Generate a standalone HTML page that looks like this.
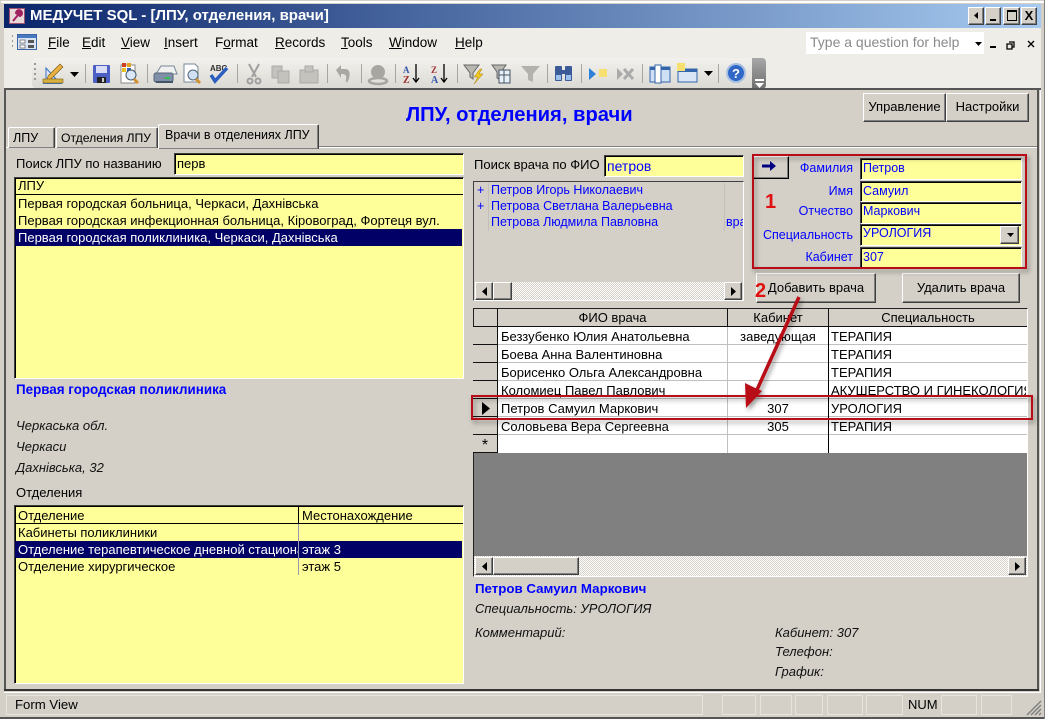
<!DOCTYPE html>
<html><head><meta charset="utf-8"><style>
html,body{margin:0;padding:0}
#r{position:relative;width:1045px;height:719px;overflow:hidden;background:#d4d0c8;font-family:"Liberation Sans",sans-serif;font-size:13px;color:#000}
#r div,#r svg{position:absolute;box-sizing:border-box}
.t{white-space:nowrap;line-height:16px;height:16px}
.u{text-decoration:underline}
.m{font-size:13.5px}
.b{background:#d4d0c8;border:1px solid;border-color:#fff #404040 #404040 #fff;box-shadow:inset -1px -1px 0 #808080;text-align:center}
.i{background:#ffff99;border:1px solid;border-color:#404040 #fff #fff #404040;box-shadow:inset 1px 1px 0 #000}
.blue{color:#0000ff;font-size:12.5px}
.bb{color:#0000ff;font-weight:bold;font-size:13.3px}
.it{font-style:italic;color:#111}
.tr{background:repeating-conic-gradient(#fff 0 25%,#d4d0c8 0 50%) 0 0/2px 2px}
.sel{background:#000066}
.sc{background:#d4d0c8;border-right:1px solid #111;border-bottom:1px solid #111;width:25px;height:18px;left:473px}
.h{background:#d4d0c8;border-right:1px solid #111;border-bottom:1px solid #111;height:19px;top:308px;text-align:center;line-height:18px;border-top:1px solid #222}
.l{height:1px;background:#c0c0c0;left:498px;width:529px}
.p{height:20px;top:695px;border:1px solid #e6e4de}
</style></head><body><div id="r">
<!-- window frame -->
<div style="left:1px;top:1px;width:1043px;height:2px;background:#fff"></div>
<div style="left:0;top:717px;width:1045px;height:2px;background:#555"></div>
<div style="left:1044px;top:0;width:1px;height:719px;background:#808080"></div>
<!-- title -->
<div style="left:4px;top:4px;width:1037px;height:24px;background:linear-gradient(90deg,#0a246a,#a6caf0)"></div>
<svg style="left:9px;top:8px" width="16" height="16"><rect x=".5" y=".5" width="15" height="15" fill="#e8d8d8" stroke="#a05070"/><path d="M4 13l5-6M7 5a3 3 0 1 1 4 3z" stroke="#a02060" stroke-width="2" fill="#a02060"/></svg>
<div class="t" style="left:30px;top:8px;color:#fff;font-weight:bold;font-size:15px">МЕДУЧЕТ SQL - [ЛПУ, отделения, врачи]</div>
<div class="b" style="left:968px;top:7px;width:16px;height:18px"><svg style="left:5px;top:4px" width="4" height="7"><path d="M4 0v7L0 3.500z"/></svg></div>
<div class="b" style="left:985px;top:7px;width:16px;height:18px"><div style="left:4px;top:11px;width:6px;height:2px;background:#000"></div></div>
<div class="b" style="left:1003px;top:7px;width:17px;height:18px"><div style="left:3px;top:2px;width:10px;height:11px;border:1px solid #000;border-top-width:2px"></div></div>
<div class="b" style="left:1021px;top:7px;width:16px;height:18px;font-weight:bold;font-size:13px;line-height:15px">X</div>
<!-- menu -->
<div style="left:4px;top:28px;width:1037px;height:61px;background:#eeede8"></div>
<svg style="left:10px;top:33px" width="28" height="20"><path d="M2 2h1v2H2zM2 7h1v2H2zM2 12h1v2H2z" fill="#999"/><rect x="7.500" y="1.500" width="19" height="15" fill="#d8e4f4" stroke="#3a66a8"/><rect x="8" y="2" width="18" height="3" fill="#4878c0"/><rect x="10" y="7" width="5" height="3" fill="#fff" stroke="#444" stroke-width=".6"/><rect x="10" y="12" width="5" height="3" fill="#fff" stroke="#444" stroke-width=".6"/><rect x="18" y="7" width="6" height="3" fill="#555"/><rect x="18" y="12" width="6" height="3" fill="#555"/></svg>
<div class="t m" style="left:48px;top:35px"><span class="u">F</span>ile</div>
<div class="t m" style="left:82px;top:35px"><span class="u">E</span>dit</div>
<div class="t m" style="left:121px;top:35px"><span class="u">V</span>iew</div>
<div class="t m" style="left:164px;top:35px"><span class="u">I</span>nsert</div>
<div class="t m" style="left:215px;top:35px">F<span class="u">o</span>rmat</div>
<div class="t m" style="left:275px;top:35px"><span class="u">R</span>ecords</div>
<div class="t m" style="left:341px;top:35px"><span class="u">T</span>ools</div>
<div class="t m" style="left:389px;top:35px"><span class="u">W</span>indow</div>
<div class="t m" style="left:455px;top:35px"><span class="u">H</span>elp</div>
<div style="left:806px;top:32px;width:178px;height:22px;background:#fff"></div>
<div class="t" style="left:810px;top:34px;font-size:14px;color:#8a8a8a">Type a question for help</div>
<svg style="left:975px;top:36px" width="65" height="16"><path d="M0 6h7l-3.500 4z" fill="#000"/><rect x="15" y="10" width="6" height="2" fill="#000"/><path d="M34 6h5v5h-2M32 8h5v5h-5z" fill="none" stroke="#000" stroke-width="1.300"/><path d="M53 5l6 6M59 5l-6 6" stroke="#000" stroke-width="1.300"/></svg>
<!-- toolbar -->
<div style="left:32px;top:58px;width:722px;height:30px;background:linear-gradient(#f2f1ed,#dcdad4);border-radius:4px 0 0 4px"></div>
<div style="left:752px;top:58px;width:14px;height:31px;background:linear-gradient(#a8a8a8,#6e6e6e);border-radius:0 4px 4px 0"></div>
<svg style="left:30px;top:58px" width="740" height="31">
<g fill="#999"><rect x="4" y="5" width="2" height="2"/><rect x="4" y="10" width="2" height="2"/><rect x="4" y="15" width="2" height="2"/><rect x="4" y="20" width="2" height="2"/></g>
<path d="M13 5v17h19v4H13z" fill="#2f6fc8"/><path d="M16 10v11h10z" fill="#e4e4f0" stroke="#2f6fc8"/><path d="M18 18l12-12 3 3-12 12-4 1z" fill="#e8b040" stroke="#705010" stroke-width=".6"/><rect x="13" y="21" width="20" height="4" fill="#d8b040" stroke="#806010" stroke-width=".6"/>
<path d="M40 14h9l-4.500 5z" fill="#000"/>
<g fill="#a8a6a0"><rect x="55" y="6" width="1" height="19"/><rect x="117" y="6" width="1" height="19"/><rect x="207" y="6" width="1" height="19"/><rect x="297" y="6" width="1" height="19"/><rect x="331" y="6" width="1" height="19"/><rect x="365" y="6" width="1" height="19"/><rect x="427" y="6" width="1" height="19"/><rect x="517" y="6" width="1" height="19"/><rect x="551" y="6" width="1" height="19"/><rect x="612" y="6" width="1" height="19"/><rect x="688" y="6" width="1" height="19"/></g>
<rect x="63" y="7" width="17" height="18" rx="1" fill="#4c5fc4"/><rect x="66" y="8" width="11" height="7" fill="#d8dcf4"/><rect x="67" y="19" width="9" height="6" fill="#222"/><rect x="72" y="20" width="2" height="4" fill="#ccc"/>
<rect x="91" y="7" width="14" height="18" fill="#fff" stroke="#888"/><rect x="92" y="5" width="4" height="4" fill="#d04020"/><rect x="97" y="5" width="4" height="4" fill="#e8a020"/><rect x="92" y="10" width="4" height="4" fill="#e8c020"/><rect x="97" y="10" width="4" height="4" fill="#3060c0"/><circle cx="101" cy="17" r="5" fill="#d8e8f8" stroke="#456"/><path d="M104 21l4 4" stroke="#d09030" stroke-width="3"/>
<path d="M126 16l5-8h13l3 8z" fill="#f0f0f0" stroke="#789"/><rect x="124" y="15" width="19" height="9" rx="2" fill="#7f8fa8" stroke="#567"/><rect x="135" y="19" width="5" height="2" fill="#30c050"/><rect x="126" y="23" width="17" height="2" fill="#456"/>
<path d="M154 6h11l3 3v15h-14z" fill="#fff" stroke="#789"/><circle cx="163" cy="17" r="5" fill="#cfe0f4" stroke="#567"/><path d="M166 21l4 4" stroke="#d09030" stroke-width="3"/>
<text x="180" y="13" font-size="8" font-weight="bold" font-family="Liberation Sans" fill="#333">ABC</text><path d="M181 17l4 6 12-13" fill="none" stroke="#2d5fc0" stroke-width="3.500"/>
<g fill="none" stroke="#a0a0a0" stroke-width="2"><path d="M219 6l7 13M229 6l-7 13"/><circle cx="220" cy="23" r="2.500"/><circle cx="228" cy="23" r="2.500"/></g>
<g fill="#c4c2bc" stroke="#aaa"><rect x="242" y="8" width="10" height="12"/><rect x="248" y="13" width="11" height="12"/><rect x="270" y="12" width="18" height="13"/><rect x="275" y="8" width="8" height="6"/></g>
<path d="M306 12l5-5v4h4c5 0 6 5 3 12-1 2-3 2-2-1 1-5-1-6-5-6v4z" fill="#aaa8a2"/>
<circle cx="348" cy="14" r="7" fill="#a8a6a0"/><ellipse cx="348" cy="23" rx="9" ry="3" fill="none" stroke="#a8a6a0" stroke-width="2.500"/>
<g transform="translate(2 0)"><text x="371" y="15" font-size="9" font-weight="bold" font-family="Liberation Serif" fill="#3355aa">A</text><text x="371" y="25" font-size="10" font-weight="bold" font-family="Liberation Serif" fill="#a03030">Z</text><path d="M384 6v17M381 20l3 4 3-4" stroke="#000" fill="none" stroke-width="1.300"/></g>
<g transform="translate(3 0)"><text x="398" y="15" font-size="9" font-weight="bold" font-family="Liberation Serif" fill="#a03030">Z</text><text x="398" y="25" font-size="10" font-weight="bold" font-family="Liberation Serif" fill="#3355aa">A</text><path d="M411 6v17M408 20l3 4 3-4" stroke="#000" fill="none" stroke-width="1.300"/></g>
<g transform="translate(6 0)"><path d="M428 7h15l-6 8v6l-3-2v-4z" fill="#b8b8b0" stroke="#666"/><path d="M444 11l-6 8h4l-4 7 9-10h-4l3-5z" fill="#f0c820" stroke="#a07810" stroke-width=".5"/></g>
<g transform="translate(4 0)"><path d="M458 7h14l-5 7v8l-4-2v-6z" fill="#b8b8b0" stroke="#666"/><rect x="465" y="12" width="11" height="13" fill="#e8f0f8" stroke="#456"/><path d="M465 17h11M470 12v13" stroke="#456"/></g>
<path d="M491 8h19l-7 8v8l-5-2v-6z" fill="#b4b2ac"/>
<g fill="#3a5a98"><rect x="525" y="8" width="7" height="15" rx="1"/><rect x="535" y="8" width="7" height="15" rx="1"/><rect x="531" y="12" width="5" height="4"/></g><g fill="#9cc0ec"><rect x="526" y="17" width="5" height="5"/><rect x="536" y="17" width="5" height="5"/></g>
<path d="M559 10l7 6-7 6z" fill="#2f80d8"/><rect x="569" y="11" width="8" height="8" fill="#f8e070"/>
<g transform="translate(-3 0)"><path d="M590 10l6 6-6 6z" fill="#aaa"/><path d="M597 11l9 10M606 11l-9 10" stroke="#aaa" stroke-width="3"/></g>
<g transform="translate(-2 0)"><rect x="622" y="9" width="20" height="15" fill="#d0e0f4" stroke="#36a"/><rect x="622" y="9" width="20" height="3" fill="#36a"/><rect x="627" y="7" width="6" height="18" fill="#fff" stroke="#36a"/></g>
<rect x="648" y="11" width="19" height="13" fill="#d8e6f6" stroke="#36a"/><rect x="648" y="11" width="19" height="3" fill="#36a"/><rect x="647" y="5" width="8" height="8" fill="#f8e070"/>
<path d="M674 13h9l-4.500 5z" fill="#000"/>
<circle cx="706" cy="15" r="9" fill="#3068c8" stroke="#a8c0e0" stroke-width="2"/><text x="702" y="20" font-size="13" font-weight="bold" font-family="Liberation Sans" fill="#fff">?</text>
<rect x="725" y="21" width="9" height="2" fill="#fff"/><path d="M725 25h9l-4.500 5z" fill="#fff"/>
</svg>
<!-- client -->
<div style="left:4px;top:88px;width:1037px;height:2px;background:#555"></div>
<div style="left:4px;top:88px;width:2px;height:603px;background:#555"></div>
<div style="left:1037px;top:90px;width:2px;height:601px;background:#555"></div>
<div style="left:4px;top:689px;width:1035px;height:2px;background:#333"></div>
<div style="left:1040px;top:90px;width:1px;height:603px;background:#fff"></div>
<div style="left:4px;top:692px;width:1037px;height:1px;background:#fff"></div>
<div class="t" style="left:406px;top:103px;font-size:20.2px;font-weight:bold;color:#0000ff;line-height:24px;height:24px">ЛПУ, отделения, врачи</div>
<div class="b" style="left:863px;top:93px;width:83px;height:29px;line-height:26px">Управление</div>
<div class="b" style="left:946px;top:93px;width:83px;height:29px;line-height:26px">Настройки</div>
<!-- tabs -->
<div style="left:318px;top:146px;width:719px;height:1px;background:#808080"></div>
<div style="left:318px;top:147px;width:719px;height:1px;background:#fff"></div>
<div style="left:6px;top:147px;width:152px;height:1px;background:#fff"></div>
<div class="b" style="left:8px;top:127px;width:47px;height:21px;text-align:left;padding-left:4px;line-height:20px;border-bottom:0;border-radius:2px 2px 0 0;font-size:12.500px">ЛПУ</div>
<div class="b" style="left:56px;top:127px;width:102px;height:21px;text-align:left;padding-left:4px;line-height:20px;border-bottom:0;border-radius:2px 2px 0 0;font-size:12.200px">Отделения ЛПУ</div>
<div class="b" style="left:158px;top:124px;width:161px;height:25px;text-align:left;padding-left:6px;line-height:20px;border-bottom:0;border-radius:2px 2px 0 0;font-size:12.500px">Врачи в отделениях ЛПУ</div>
<!-- left -->
<div class="t" style="left:16px;top:156px">Поиск ЛПУ по названию</div>
<div class="i" style="left:174px;top:153px;width:290px;height:22px"></div>
<div class="t" style="left:177px;top:156px">перв</div>
<div class="i" style="left:14px;top:177px;width:450px;height:202px"></div>
<div style="left:15px;top:194px;width:448px;height:1px;background:#000"></div>
<div class="t" style="left:18px;top:178px">ЛПУ</div>
<div class="t" style="left:18px;top:196px">Первая городская больница, Черкаси, Дахнівська</div>
<div class="t" style="left:18px;top:213px">Первая городская инфекционная больница, Кіровоград, Фортеця вул.</div>
<div class="sel" style="left:15px;top:229px;width:447px;height:17px"></div>
<div class="t" style="left:18px;top:230px;color:#fff">Первая городская поликлиника, Черкаси, Дахнівська</div>
<div class="t bb" style="left:16px;top:382px;font-size:13.400px">Первая городская поликлиника</div>
<div class="t it" style="left:16px;top:418px">Черкаська обл.</div>
<div class="t it" style="left:16px;top:439px">Черкаси</div>
<div class="t it" style="left:16px;top:460px">Дахнівська, 32</div>
<div class="t" style="left:16px;top:485px">Отделения</div>
<div class="i" style="left:14px;top:505px;width:450px;height:179px"></div>
<div style="left:15px;top:523px;width:448px;height:1px;background:#000"></div>
<div style="left:298px;top:507px;width:1px;height:16px;background:#000"></div>
<div style="left:298px;top:524px;width:1px;height:51px;background:#9a9ab0"></div>
<div class="t" style="left:18px;top:508px">Отделение</div>
<div class="t" style="left:302px;top:508px">Местонахождение</div>
<div class="t" style="left:18px;top:525px">Кабинеты поликлиники</div>
<div class="sel" style="left:15px;top:541px;width:447px;height:17px"></div>
<div class="t" style="left:18px;top:542px;width:280px;overflow:hidden;color:#fff">Отделение терапевтическое дневной стационар</div>
<div style="left:298px;top:541px;width:1px;height:17px;background:#9a9ab0"></div>
<div class="t" style="left:302px;top:542px;color:#fff">этаж 3</div>
<div class="t" style="left:18px;top:559px">Отделение хирургическое</div>
<div class="t" style="left:302px;top:559px">этаж 5</div>
<!-- right top -->
<div class="t" style="left:474px;top:157px">Поиск врача по ФИО</div>
<div class="i" style="left:604px;top:155px;width:140px;height:22px"></div>
<div class="t blue" style="left:607px;top:158px;font-size:14px">петров</div>
<div style="left:473px;top:181px;width:271px;height:120px;border:1px solid;border-color:#404040 #fff #fff #404040"></div>
<div style="left:488px;top:183px;width:1px;height:48px;background:#c4c0b8"></div>
<div style="left:724px;top:183px;width:1px;height:48px;background:#c4c0b8"></div>
<div class="t blue" style="left:477px;top:182px">+</div>
<div class="t blue" style="left:477px;top:198px">+</div>
<div class="t blue" style="left:491px;top:182px">Петров Игорь Николаевич</div>
<div class="t blue" style="left:491px;top:198px">Петрова Светлана Валерьевна</div>
<div class="t blue" style="left:491px;top:214px">Петрова Людмила Павловна</div>
<div class="t blue" style="left:726px;top:214px;width:17px;overflow:hidden">врач</div>
<div class="tr" style="left:475px;top:282px;width:267px;height:18px"></div>
<div class="b" style="left:475px;top:282px;width:18px;height:18px"><svg style="left:6px;top:4px" width="5" height="9"><path d="M5 0v9L0 4.500z"/></svg></div>
<div class="b" style="left:493px;top:282px;width:19px;height:18px"></div>
<div class="b" style="left:724px;top:282px;width:18px;height:18px"><svg style="left:6px;top:4px" width="5" height="9"><path d="M0 0v9l5-4.500z"/></svg></div>
<div class="b" style="left:753px;top:156px;width:36px;height:23px;border-color:#fff #000 #000 #fff"></div>
<svg style="left:762px;top:160px" width="16" height="12"><path d="M0 4.500h8V1l6 5-6 5V7.500H0z" fill="#000080"/></svg>
<div class="t blue" style="left:780px;top:160px;width:73px;text-align:right">Фамилия</div>
<div class="t blue" style="left:780px;top:183px;width:73px;text-align:right">Имя</div>
<div class="t blue" style="left:780px;top:203px;width:73px;text-align:right">Отчество</div>
<div class="t blue" style="left:755px;top:227px;width:98px;text-align:right">Специальность</div>
<div class="t blue" style="left:780px;top:249px;width:73px;text-align:right">Кабинет</div>
<div class="i" style="left:860px;top:158px;width:162px;height:22px"></div>
<div class="i" style="left:860px;top:181px;width:162px;height:21px"></div>
<div class="i" style="left:860px;top:202px;width:162px;height:22px"></div>
<div class="i" style="left:860px;top:224px;width:162px;height:22px"></div>
<div class="i" style="left:860px;top:247px;width:162px;height:21px"></div>
<div class="t blue" style="left:863px;top:160px">Петров</div>
<div class="t blue" style="left:863px;top:183px">Самуил</div>
<div class="t blue" style="left:863px;top:203px">Маркович</div>
<div class="t blue" style="left:863px;top:225px">УРОЛОГИЯ</div>
<div class="t blue" style="left:863px;top:249px">307</div>
<div class="b" style="left:1000px;top:226px;width:19px;height:18px"><svg style="left:6px;top:6px" width="7" height="4"><path d="M0 0h7L3.500 4z"/></svg></div>
<div class="b" style="left:756px;top:273px;width:120px;height:30px;line-height:27px">Добавить врача</div>
<div class="b" style="left:902px;top:273px;width:118px;height:30px;line-height:27px">Удалить врача</div>
<!-- grid -->
<div style="left:473px;top:308px;width:555px;height:269px;background:#808080;border:1px solid;border-color:#222 #fff #fff #222"></div>
<div class="h" style="left:473px;width:25px;border-left:1px solid #222"></div>
<div class="h" style="left:498px;width:230px">ФИО врача</div>
<div class="h" style="left:728px;width:101px">Кабинет</div>
<div class="h" style="left:829px;width:198px;border-right:0">Специальность</div>
<div style="left:498px;top:327px;width:529px;height:126px;background:#fff"></div>
<div class="l" style="top:344px"></div>
<div class="l" style="top:362px"></div>
<div class="l" style="top:380px"></div>
<div class="l" style="top:398px"></div>
<div class="l" style="top:416px"></div>
<div class="l" style="top:434px"></div>
<div style="left:727px;top:327px;width:1px;height:126px;background:#c0c0c0"></div>
<div style="left:828px;top:327px;width:1px;height:126px;background:#000"></div>
<div class="sc" style="top:327px"></div>
<div class="sc" style="top:345px"></div>
<div class="sc" style="top:363px"></div>
<div class="sc" style="top:381px"></div>
<div class="sc" style="top:399px"></div>
<div class="sc" style="top:417px"></div>
<div class="sc" style="top:435px;text-align:center;font-size:16px;line-height:21px">*</div>
<svg style="left:482px;top:402px" width="9" height="13"><path d="M0 0l8 6.500L0 13z"/></svg>
<div class="t" style="left:501px;top:329px">Беззубенко Юлия Анатольевна</div>
<div class="t" style="left:728px;top:329px;width:100px;text-align:center">заведующая</div>
<div class="t" style="left:831px;top:329px">ТЕРАПИЯ</div>
<div class="t" style="left:501px;top:347px">Боева Анна Валентиновна</div>
<div class="t" style="left:831px;top:347px">ТЕРАПИЯ</div>
<div class="t" style="left:501px;top:365px">Борисенко Ольга Александровна</div>
<div class="t" style="left:831px;top:365px">ТЕРАПИЯ</div>
<div class="t" style="left:501px;top:383px">Коломиец Павел Павлович</div>
<div class="t" style="left:831px;top:383px;width:195px;overflow:hidden">АКУШЕРСТВО И ГИНЕКОЛОГИЯ</div>
<div class="t" style="left:501px;top:401px">Петров Самуил Маркович</div>
<div class="t" style="left:728px;top:401px;width:100px;text-align:center">307</div>
<div class="t" style="left:831px;top:401px">УРОЛОГИЯ</div>
<div class="t" style="left:501px;top:419px">Соловьева Вера Сергеевна</div>
<div class="t" style="left:728px;top:419px;width:100px;text-align:center">305</div>
<div class="t" style="left:831px;top:419px">ТЕРАПИЯ</div>
<div class="tr" style="left:474px;top:556px;width:553px;height:20px"></div>
<div class="b" style="left:475px;top:557px;width:18px;height:18px"><svg style="left:6px;top:4px" width="5" height="9"><path d="M5 0v9L0 4.500z"/></svg></div>
<div class="b" style="left:493px;top:557px;width:86px;height:18px"></div>
<div class="b" style="left:1008px;top:557px;width:18px;height:18px"><svg style="left:6px;top:4px" width="5" height="9"><path d="M0 0v9l5-4.500z"/></svg></div>
<!-- bottom -->
<div class="t bb" style="left:475px;top:581px">Петров Самуил Маркович</div>
<div class="t it" style="left:475px;top:601px">Специальность: УРОЛОГИЯ</div>
<div class="t it" style="left:475px;top:625px">Комментарий:</div>
<div class="t it" style="left:775px;top:625px">Кабинет: 307</div>
<div class="t it" style="left:775px;top:644px">Телефон:</div>
<div class="t it" style="left:775px;top:664px">График:</div>
<!-- status -->
<div class="t" style="left:15px;top:697px;font-size:13.2px">Form View</div>
<div class="t" style="left:908px;top:697px;font-size:13px">NUM</div>
<div class="p" style="left:6px;width:697px"></div>
<div class="p" style="left:722px;width:34px"></div>
<div class="p" style="left:760px;width:32px"></div>
<div class="p" style="left:795px;width:28px"></div>
<div class="p" style="left:827px;width:36px"></div>
<div class="p" style="left:866px;width:37px"></div>
<div class="p" style="left:941px;width:36px"></div>
<div class="p" style="left:981px;width:31px"></div>
<svg style="left:1026px;top:700px" width="16" height="16"><path d="M15 1L1 15M15 5L5 15M15 9L9 15M15 13L13 15" stroke="#808080" stroke-width="1.500"/></svg>
<!-- annotations -->
<svg style="left:0;top:0" width="1045" height="719">
<defs><filter id="s" x="-20%" y="-20%" width="140%" height="140%"><feDropShadow dx="2" dy="3" stdDeviation="2.500" flood-color="#000" flood-opacity=".4"/></filter></defs>
<g filter="url(#s)" fill="none" stroke="#b80a14" stroke-width="2">
<rect x="753" y="155" width="273" height="113"/>
<rect x="472" y="396" width="560" height="23"/>
<path d="M799 297L756 392" stroke-width="3.500"/>
<path d="M746 408l-1-25 8 4 9 4z" fill="#b80a14" stroke="none"/>
</g>
<text x="765" y="208" fill="#e01010" font-size="20" font-weight="bold" font-family="Liberation Sans">1</text>
<text x="755" y="297" fill="#e01010" font-size="20" font-weight="bold" font-family="Liberation Sans">2</text>
</svg>
</div></body></html>
